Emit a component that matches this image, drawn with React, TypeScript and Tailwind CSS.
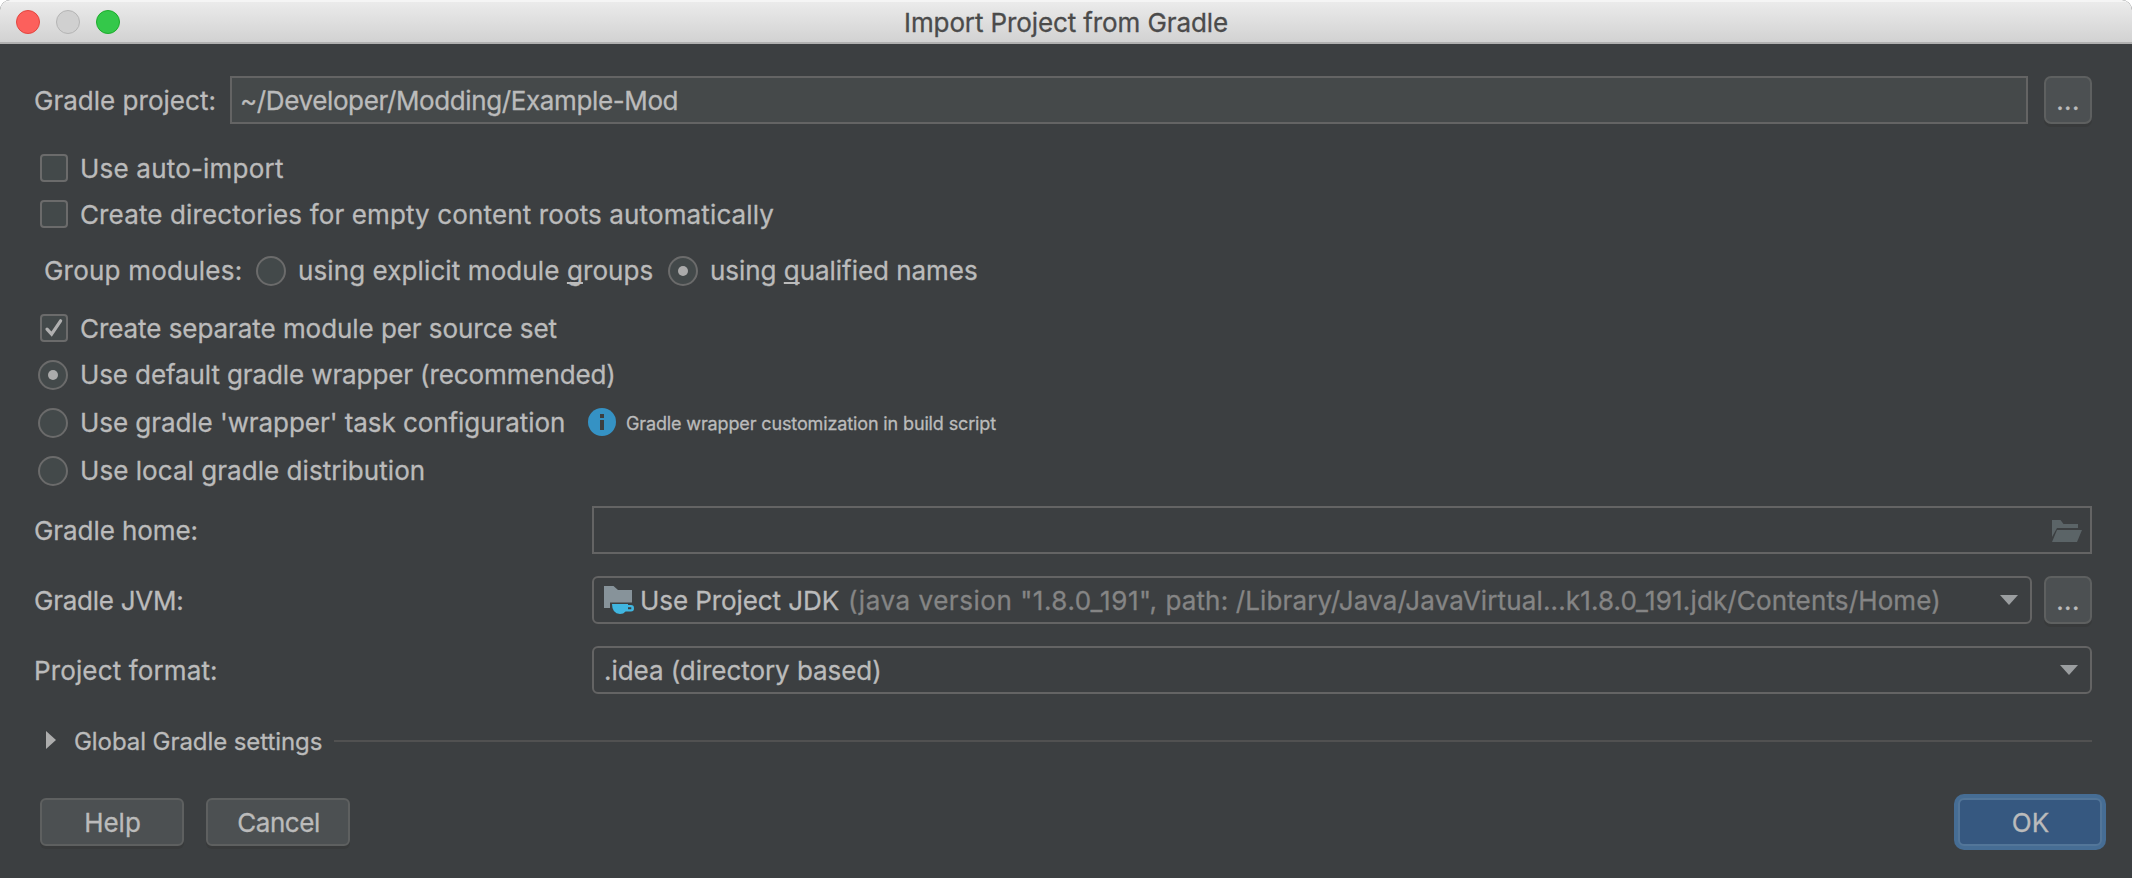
import type { ReactNode } from "react";

function Box({ checked = false }: { checked?: boolean }) {
  return (
    <span className="box-border flex h-[28px] w-[28px] shrink-0 rounded-[4px] border-2 border-[#6b6b6b] bg-[#43494a]">
      {checked && (
        <svg viewBox="2 2 24 24" className="h-[24px] w-[24px]" fill="none">
          <path d="M7 15.2 L11.6 20.2 L20.6 6.8" stroke="#b0b0b0" strokeWidth="3.2" strokeLinecap="round" />
        </svg>
      )}
    </span>
  );
}

function Radio({ checked = false }: { checked?: boolean }) {
  return (
    <span className="flex h-[30px] w-[30px] shrink-0 items-center justify-center rounded-full border-2 border-[#6b6b6b] bg-[#43494a]">
      {checked && <span className="h-[10px] w-[10px] rounded-full bg-[#ababab]" />}
    </span>
  );
}

function MoreButton() {
  return (
    <button className="flex h-[48px] w-[48px] shrink-0 items-center justify-center rounded-[7px] border-2 border-[#5e6060] bg-[#4c5052] pt-[2px] tracking-[0.4px] shadow-[0_3px_0_#383a3b]">
      ...
    </button>
  );
}

function Arrow() {
  return (
    <svg viewBox="0 0 18 10" className="h-[10px] w-[18px] shrink-0">
      <path d="M0 0 H18 L9 10 Z" fill="#9b9ea0" />
    </svg>
  );
}

function Button({ children }: { children: ReactNode }) {
  return (
    <button className="flex h-[48px] w-[144px] items-center justify-center rounded-[6px] border-2 border-[#5e6060] bg-[#4c5052] pt-[2px] pl-px shadow-[0_3px_0_#383a3b]">
      {children}
    </button>
  );
}

function JdkIcon() {
  return (
    <svg viewBox="0 0 32 30" className="ml-[10px] h-[30px] w-[32px] shrink-0">
      <path d="M0 1 H9.5 L14 5 H28 V17.5 H6 V23 H0 Z" fill="#87939a" />
      <path d="M8 19 H24 V20 H27 Q30 20 30 23.2 Q30 26.5 27 26.5 H21.6 Q19.5 29 16 29 Q8 28.5 8 19 Z M24 22.3 V24.3 H27.3 V22.3 Z" fill="#40b6e0" fillRule="evenodd" />
    </svg>
  );
}

export default function App() {
  return (
    <div className="h-[878px] w-[2132px] overflow-hidden bg-white font-[Inter,sans-serif] text-[26px] leading-[30px] whitespace-nowrap text-[#bbbbbb] [-webkit-text-stroke:0.3px]">
      <div className="flex h-full flex-col overflow-hidden rounded-t-[10px] bg-[#3c3f41]">
        <header className="grid h-[44px] shrink-0 grid-cols-[1fr_auto_1fr] items-center border-t-2 border-b-2 border-t-[#f5f5f5] border-b-[#b0b0b0] bg-linear-to-b from-[#ebebeb] to-[#d2d2d2]">
          <div className="flex gap-[16px] pl-[16px]">
            <span className="h-[24px] w-[24px] rounded-full border border-[#e2463f] bg-[#fc605c]" />
            <span className="h-[24px] w-[24px] rounded-full border border-[#b4b4b4] bg-[#d0d0d0]" />
            <span className="h-[24px] w-[24px] rounded-full border border-[#1dac2c] bg-[#34c84a]" />
          </div>
          <h1 className="pt-[2px] tracking-[-0.11px] text-[#4b4b4b]">Import Project from Gradle</h1>
        </header>

        <main className="flex flex-col pt-[32px] pr-[40px] pl-[34px]">
          <div className="flex h-[48px] items-center">
            <label className="w-[196px] pt-[2px] tracking-[0.02px]">Gradle project:</label>
            <div className="mr-[16px] flex h-[48px] grow items-center border-2 border-[#646464] bg-[#45494a] pt-[2px] pl-[8px] tracking-[-0.38px]">
              ~/Developer/Modding/Example-Mod
            </div>
            <MoreButton />
          </div>

          <div className="mt-[30px] flex h-[28px] items-center gap-[12px] pl-[6px]">
            <Box />
            <span className="pt-[2px] tracking-[0.2px]">Use auto-import</span>
          </div>
          <div className="mt-[18px] flex h-[28px] items-center gap-[12px] pl-[6px]">
            <Box />
            <span className="pt-[2px] tracking-[0.13px]">Create directories for empty content roots automatically</span>
          </div>

          <div className="mt-[28px] flex h-[30px] items-center pl-[10px]">
            <span className="w-[212px] tracking-[0.22px]">Group modules:</span>
            <Radio />
            <span className="ml-[12px] w-[370px] tracking-[0.1px]">
              using explicit module{" "}
              <span className="underline decoration-2 underline-offset-[2px] [text-decoration-skip-ink:none]">g</span>roups
            </span>
            <Radio checked />
            <span className="ml-[12px] tracking-[-0.04px]">
              using{" "}
              <span className="underline decoration-2 underline-offset-[2px] [text-decoration-skip-ink:none]">q</span>ualified names
            </span>
          </div>

          <div className="mt-[28px] flex h-[28px] items-center gap-[12px] pl-[6px]">
            <Box checked />
            <span className="pt-[2px] tracking-[-0.06px]">Create separate module per source set</span>
          </div>
          <div className="mt-[18px] flex h-[30px] items-center gap-[12px] pl-[4px]">
            <Radio checked />
            <span className="tracking-[-0.11px]">Use default gradle wrapper (recommended)</span>
          </div>
          <div className="mt-[18px] flex h-[30px] items-center gap-[12px] pl-[4px]">
            <Radio />
            <span className="w-[496px] tracking-[-0.06px]">Use gradle &#39;wrapper&#39; task configuration</span>
            <svg viewBox="0 0 28 28" className="mt-[-2px] h-[28px] w-[28px] shrink-0">
              <circle cx="14" cy="14" r="14" fill="#3592c4" />
              <path d="M12 6h4v4h-4zM12 12h4v10h-4z" fill="#3c3f41" />
            </svg>
            <span className="ml-[-2px] pt-[2px] text-[18px] tracking-[-0.13px]">Gradle wrapper customization in build script</span>
          </div>
          <div className="mt-[18px] flex h-[30px] items-center gap-[12px] pl-[4px]">
            <Radio />
            <span className="tracking-[0.05px]">Use local gradle distribution</span>
          </div>

          <div className="mt-[20px] flex h-[48px] items-center">
            <label className="w-[558px] pt-[2px] tracking-[-0.07px]">Gradle home:</label>
            <div className="flex h-[48px] grow items-center justify-end border-2 border-[#646464] pt-[2px] pr-[8px]">
              <svg viewBox="0 0 30 22" className="h-[22px] w-[30px]" fill="#5b6467">
                <path d="M0 0 H8.5 L11.5 4 H26 V8 H5 L0 17 Z" />
                <path d="M5 10 H30 L25 22 H0 Z" />
              </svg>
            </div>
          </div>

          <div className="mt-[22px] flex h-[48px] items-center">
            <label className="w-[558px] pt-[2px] tracking-[-0.25px]">Gradle JVM:</label>
            <div className="mr-[12px] flex h-[48px] grow items-center rounded-[6px] border-2 border-[#646464] pr-[12px]">
              <JdkIcon />
              <span className="ml-[4px] pt-[2px] tracking-[-0.08px]">Use Project JDK</span>
              <span className="ml-[9px] grow pt-[2px] tracking-[0.14px] text-[#858585]">
                <span className="tracking-[0.54px]">(java version "1.8.0_191", </span>
                path: /Library/Java/JavaVirtual...k1.8.0_191.jdk/Contents/Home)
              </span>
              <Arrow />
            </div>
            <MoreButton />
          </div>

          <div className="mt-[22px] flex h-[48px] items-center">
            <label className="w-[558px] pt-[2px] tracking-[0.13px]">Project format:</label>
            <div className="flex h-[48px] grow items-center justify-between rounded-[6px] border-2 border-[#646464] pr-[12px] pl-[10px]">
              <span className="pt-[2px] tracking-[-0.05px]">.idea (directory based)</span>
              <Arrow />
            </div>
          </div>

          <div className="mt-[32px] flex h-[30px] items-center">
            <svg viewBox="0 0 10 18" className="mt-[-2px] ml-[12px] h-[18px] w-[10px]">
              <path d="M0 0 L10 9 L0 18 Z" fill="#adadad" />
            </svg>
            <span className="ml-[18px] w-[260px] pt-[2px] text-[24px] tracking-[-0.07px]">Global Gradle settings</span>
            <span className="h-[2px] grow bg-[#515151]" />
          </div>
        </main>

        <footer className="mt-[38px] flex h-[56px] items-center pr-[26px] pl-[40px]">
          <Button>Help</Button>
          <span className="w-[22px]" />
          <Button>
            <span className="tracking-[-0.45px]">Cancel</span>
          </Button>
          <button className="ml-auto flex h-[56px] w-[152px] items-center justify-center rounded-[10px] bg-[#466d94] p-[4px]">
            <span className="flex h-full w-full items-center justify-center rounded-[6px] border-2 border-[#537699] bg-[#365880] pt-[2px] pl-px">OK</span>
          </button>
        </footer>
      </div>
    </div>
  );
}
